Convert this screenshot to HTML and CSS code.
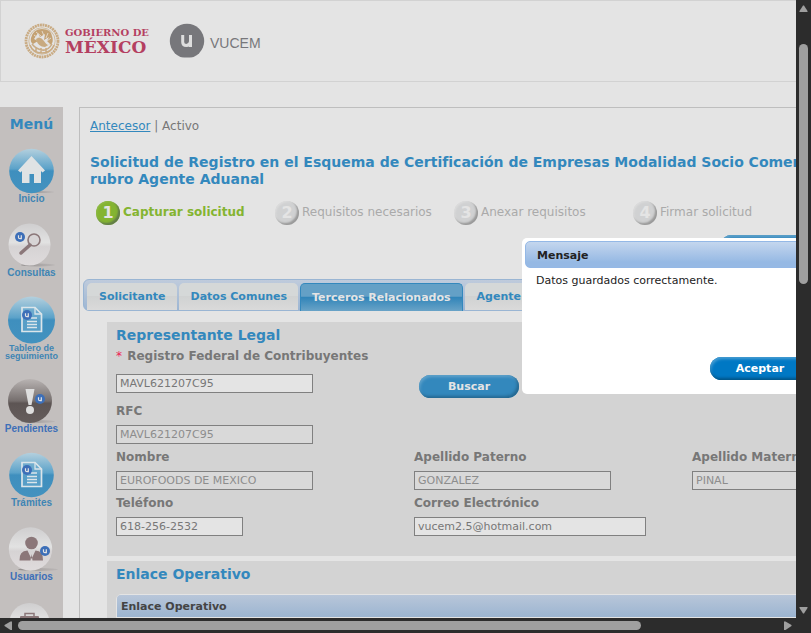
FILE: index.html
```html
<!DOCTYPE html>
<html lang="es">
<head>
<meta charset="utf-8">
<title>VUCEM</title>
<link rel="stylesheet" href="styles.css">
</head>
<body>
<svg class="defs" aria-hidden="true">
  <defs>
    <linearGradient id="blue" x1="0" y1="0" x2="0" y2="1"><stop offset="0" stop-color="#b4d0de"/><stop offset=".45" stop-color="#5ba2c9"/><stop offset=".5" stop-color="#3f8fbe"/><stop offset="1" stop-color="#4392bf"/></linearGradient>
    <linearGradient id="light" x1="0" y1="0" x2="0" y2="1"><stop offset="0" stop-color="#cfcecf"/><stop offset=".45" stop-color="#e2e2e2"/><stop offset=".55" stop-color="#d6d3d4"/><stop offset="1" stop-color="#dfdbdc"/></linearGradient>
    <linearGradient id="dark" x1="0" y1="0" x2="0" y2="1"><stop offset="0" stop-color="#b8b3b2"/><stop offset=".5" stop-color="#756e6d"/><stop offset=".55" stop-color="#5d5554"/><stop offset="1" stop-color="#655d5c"/></linearGradient>
    <linearGradient id="shade" x1="0" y1="0" x2="1" y2="0"><stop offset="0" stop-color="#8a8686" stop-opacity=".9"/><stop offset="1" stop-color="#aaa6a6" stop-opacity=".4"/></linearGradient>
    <g id="badge"><circle r="5" fill="#3d6fb8"/><path d="M-1.500-1.800V.4Q-1.500 1.600 0 1.600T1.300.4V-1.800M1.300-1.800V2.200" fill="none" stroke="#e4e4e4" stroke-width="1.200"/></g>
    <g id="doc" fill="none" stroke="#dbe5ea" stroke-width="1.700"><path d="M22 10.500H35L41.500 17V34.500H22Z" fill="#68a9cd" fill-opacity=".6"/><path d="M35 10.500V17H41.500M31 21H37M27 24.500H37M27 27.500H37M27 30.500H37" stroke-width="1.300"/></g>
  </defs>
</svg>
<div class="window">
  <div class="viewport">
    <div class="page">
      <header class="header">
        <svg class="emblem" viewBox="0 0 36 36" aria-hidden="true">
          <circle cx="18" cy="18" r="16" fill="none" stroke="#c9ab83" stroke-width="2.800" stroke-dasharray="2 .6"/>
          <circle cx="18" cy="18" r="13.200" fill="none" stroke="#d2bd9e" stroke-width="1"/>
          <path d="M7 15Q9 6 18 6Q27 6 28 13Q30 18 27 22L23 18 25 14 20 17 21 11 16 14 14 10 10 16 14 18 9 21Q6 19 7 15Z" fill="#c4a273"/>
          <path d="M12 16Q16 12 20 18T26 21L21 24Q14 24 12 16Z" fill="#c8aa80"/>
          <path d="M10 12L14 15M12 9L17 13M18 8L20 13M24 10L22 15M27 15L23 18" stroke="#e4ddd2" stroke-width=".9"/>
          <path d="M6 22Q9 30 18 30T30 22M8 21Q12 26 18 27T28 21M12 24V28M17 25V30M22 25V29" fill="none" stroke="#c9ab83" stroke-width="1.500"/>
        </svg>
        <div class="gob"><span class="gob-top">GOBIERNO DE</span><span class="gob-name">MÉXICO</span></div>
        <svg class="vucem-mark" viewBox="0 0 36 36" aria-hidden="true"><clipPath id="cut"><rect width="36" height="34.500"/></clipPath><circle cx="18" cy="18" r="17.200" fill="#77777b" clip-path="url(#cut)"/><path d="M13.700 12V19Q13.700 22.500 17.300 22.500T21.500 18.500V12M21.500 18V24" fill="none" stroke="#dedede" stroke-width="3"/></svg>
        <span class="vucem">VUCEM</span>
      </header>
      <div class="columns">
        <nav class="menu">
          <h2>Menú</h2>
          <a href="#"><svg viewBox="0 0 63 46"><ellipse cx="40" cy="44" rx="14" ry="1" fill="url(#shade)"/><circle cx="31.500" cy="23" r="22.300" fill="url(#blue)"/><path d="M31.500 8L45 22.500 42.500 24.500 41 23V35H34V26H29.500V35H22V23L20.500 24.500 18 22.500Z" fill="#e0e3e4"/></svg><span>Inicio</span></a>
          <a href="#"><svg viewBox="0 0 63 46"><ellipse cx="38" cy="43" rx="17" ry="1.400" fill="url(#shade)"/><circle cx="29.500" cy="22.500" r="21" fill="url(#light)"/><circle cx="34" cy="18" r="6" fill="#d7d4d5" stroke="#8b7779" stroke-width="1.600"/><path d="M30 23L21 31" stroke="#8b7779" stroke-width="3.500" stroke-linecap="round"/><use href="#badge" x="20" y="15"/></svg><span>Consultas</span></a>
          <a href="#"><svg class="tall" viewBox="0 0 63 48"><circle cx="31.500" cy="24" r="23.500" fill="url(#blue)"/><use href="#doc" x="0" y="1"/><use href="#badge" x="27" y="19"/></svg><span class="two-line">Tablero de<br>seguimiento</span></a>
          <a class="bright" href="#"><svg viewBox="0 0 63 46"><ellipse cx="38" cy="43.500" rx="17" ry="1.400" fill="url(#shade)"/><circle cx="30" cy="23" r="22" fill="url(#dark)"/><path d="M25.500 11H34.500L31.500 27H28.500Z" fill="#dedede"/><circle cx="30" cy="32" r="4" fill="#dedede"/><use href="#badge" x="40" y="21"/></svg><span>Pendientes</span></a>
          <a href="#"><svg viewBox="0 0 63 46"><circle cx="31.500" cy="23" r="22.300" fill="url(#blue)"/><use href="#doc"/><use href="#badge" x="27" y="18"/></svg><span>Trámites</span></a>
          <a class="bright" href="#"><svg viewBox="0 0 63 46"><ellipse cx="38" cy="43.500" rx="20" ry="1.400" fill="url(#shade)"/><circle cx="30.500" cy="23" r="21.700" fill="url(#light)"/><circle cx="31.500" cy="17" r="6.300" fill="#8b7779"/><path d="M19.500 34.500Q19 25 27.500 24.500L31.500 33 35.500 24.500Q43.500 25 43 34.500H32.500L31.500 28 30.500 34.500Z" fill="#8b7779"/><use href="#badge" x="45" y="25"/></svg><span>Usuarios</span></a>
          <a href="#" aria-label="Administración"><svg viewBox="0 0 63 46"><circle cx="29.500" cy="23" r="20" fill="url(#light)"/><path d="M25 16V13.500H34V16" fill="none" stroke="#8b7779" stroke-width="1.500"/><rect x="20" y="16" width="19" height="14" rx="1" fill="#8b7779"/></svg></a>
        </nav>
        <main class="main">
          <p class="crumbs"><a href="#">Antecesor</a> | Activo</p>
          <h1>Solicitud de Registro en el Esquema de Certificación de Empresas Modalidad Socio Comercial<br>rubro Agente Aduanal</h1>
          <ol class="steps">
            <li class="current"><b>1</b><span>Capturar solicitud</span></li>
            <li><b>2</b><span>Requisitos necesarios</span></li>
            <li><b>3</b><span>Anexar requisitos</span></li>
            <li><b>4</b><span>Firmar solicitud</span></li>
          </ol>
          <div class="actions"><button class="pill wide" type="button" aria-label="Guardar"></button></div>
          <div class="tabs">
            <button type="button">Solicitante</button>
            <button type="button">Datos Comunes</button>
            <button type="button" class="active">Terceros Relacionados</button>
            <button type="button">Agente</button>
          </div>
          <form class="panel">
            <h2>Representante Legal</h2>
            <div class="grid">
              <label for="rfcq"><i>*</i> Registro Federal de Contribuyentes</label>
              <div class="search"><input id="rfcq" value="MAVL621207C95"></div>
              <div class="buscar"><button class="pill" type="button">Buscar</button></div>
              <div class="field first"><label for="rfc">RFC</label><input id="rfc" value="MAVL621207C95" disabled></div>
              <div class="field"><label for="nom">Nombre</label><input id="nom" value="EUROFOODS DE MEXICO" disabled></div>
              <div class="field"><label for="pat">Apellido Paterno</label><input id="pat" value="GONZALEZ" disabled></div>
              <div class="field"><label for="mat">Apellido Materno</label><input id="mat" value="PINAL" disabled></div>
              <div class="field"><label for="tel">Teléfono</label><input id="tel" class="short" value="618-256-2532"></div>
              <div class="field"><label for="mail">Correo Electrónico</label><input id="mail" class="long" value="vucem2.5@hotmail.com"></div>
            </div>
          </form>
          <section class="panel second">
            <h2>Enlace Operativo</h2>
            <table><thead><tr><th colspan="4">Enlace Operativo</th></tr></thead><tbody><tr><td></td><td></td><td></td><td></td></tr></tbody></table>
          </section>
        </main>
      </div>
    </div>
    <div class="dialog" role="dialog" aria-labelledby="dt">
      <h2 id="dt">Mensaje</h2>
      <p>Datos guardados correctamente.</p>
      <div class="dialog-foot"><button class="pill strong" type="button">Aceptar</button></div>
    </div>
  </div>
  <div class="bar vertical" aria-hidden="true"><svg viewBox="0 0 15 15"><path d="M7 5.500H8L11.500 11V12H3.500V11Z"/></svg><div class="track"><div class="thumb"></div></div><svg viewBox="0 0 15 15"><path d="M3.500 4H11.500V5L8 10.500H7L3.500 5Z"/></svg></div>
  <div class="bar horizontal" aria-hidden="true"><svg viewBox="0 0 15 15"><path d="M4.500 7V8L10.500 12H12V3.500H10.500Z"/></svg><div class="track"><div class="thumb"></div></div><svg viewBox="0 0 15 15"><path d="M3 3.500H4.500L10.500 7V8L4.500 12H3Z"/></svg></div>
</div>
</body>
</html>
```
FILE: styles.css
```css
* { box-sizing: border-box; }
body { margin: 0; font-family: Verdana, "DejaVu Sans", sans-serif; font-size: 12px; color: #777; background: #e4e4e4; }
h1, h2, p, ol { margin: 0; padding: 0; }
a { color: #3388bd; }
button, input { font-family: inherit; }
.defs { position: absolute; width: 0; height: 0; }

.window { display: grid; grid-template-columns: minmax(0, 1fr) 15px; grid-template-rows: minmax(0, 1fr) 15px; height: 100vh; background: #2c2c2c; }
.viewport { position: relative; overflow: hidden; background: #e4e4e4; }
.page { min-width: 982px; }

.header { display: flex; align-items: center; height: 82px; padding-left: 23px; border: 1px solid #d2d2d2; }
.emblem { width: 36px; height: 36px; }
.gob { display: flex; flex-direction: column; margin-left: 5px; width: 104px; font-family: "DejaVu Serif", serif; font-weight: bold; color: #b43f61; white-space: nowrap; }
.gob-top { font-size: 10px; line-height: 12px; }
.gob-name { font-size: 17px; line-height: 16px; }
.vucem-mark { width: 36px; height: 36px; }
.vucem { margin-left: 5px; padding-top: 4px; font: 14px/16px "Liberation Sans", sans-serif; color: #77777b; }

.columns { display: flex; gap: 16px; margin-top: 25px; }
.menu { flex: none; width: 63px; padding-top: 8px; background: #c3bfbe; display: flex; flex-direction: column; gap: 18px; }
.menu h2 { font-size: 14px; line-height: 18px; margin-bottom: -3px; text-align: center; color: #3388bd; }
.menu a { display: flex; flex-direction: column; text-align: center; text-decoration: none; font: bold 10px/10px "Liberation Sans", sans-serif; color: #3f85b4; white-space: nowrap; }
.menu .bright { color: #3d6fb8; }
.menu svg { width: 63px; height: 46px; }
.menu .tall { height: 48px; }
.menu .two-line { font-size: 9px; line-height: 8px; }

.main { flex: 1; border: 1px solid #bebebe; padding: 10px 3px 40px; }
.crumbs { padding-left: 7px; line-height: 16px; }
h1 { padding-left: 7px; margin-top: 20px; font-size: 14px; line-height: 17px; color: #3388bd; white-space: nowrap; }
.steps { display: grid; grid-template-columns: repeat(4, 179px); margin-top: 13px; padding-left: 13px; list-style: none; color: #aaa; }
.steps li { display: flex; align-items: center; gap: 3px; white-space: nowrap; }
.steps span { line-height: 16px; padding-bottom: 3px; }
.steps b { width: 24px; height: 24px; border-radius: 50%; background: #d0d1d2; box-shadow: inset -2px -2px 2px #999, inset 1px 1px 2px #dcdcdc; color: #e4e4e4; font-size: 16px; line-height: 23px; text-align: center; }
.steps .current { color: #84b431; font-weight: bold; }
.steps .current b { background: #84b431; box-shadow: inset -2px -2px 2px #627c4a, inset 1px 1px 2px #8fba48; }

.pill { width: 100px; height: 23px; padding: 0; border: 0; border-radius: 12px; background: #3388bd; box-shadow: inset -2px -2px 3px #256891, inset 1px 2px 3px #62a3cb; color: #e4e4e4; font-size: 11px; font-weight: bold; line-height: 23px; }
.wide { width: 140px; }
.strong { background: #0078c4; box-shadow: inset -1px -2px 3px #005487, inset 1px 2px 3px #4ba0d4; color: #fff; }
.actions { padding: 10px 0 0 637px; height: 54px; }

.tabs { display: flex; align-items: flex-end; gap: 2px; height: 32px; padding: 0 3px; border: 1px solid #9ab5d3; border-radius: 6px 6px 0 6px; background: linear-gradient(#bfcbdc, #9db6d3); }
.tabs button { height: 27px; padding: 0 11px 0 12px; border: 0; border-radius: 5px 5px 0 0; background: linear-gradient(#d5d8d8 50%, #d0d2d2 50%, #dadada); color: #3388bd; font-size: 11px; font-weight: bold; white-space: nowrap; }
.tabs .active { height: 28px; margin-bottom: -1px; border: 1px solid #3388bd; border-bottom: 0; padding: 0 11px; background: linear-gradient(#64a0c6 45%, #3285b9 50%, #69a3c7); color: #e4e4e4; }

.panel { margin: 11px 0 0 24px; padding: 4px 9px 16px; background: #d3d3d3; }
.panel h2 { font-size: 14px; line-height: 18px; color: #3388bd; }
.grid { display: grid; grid-template-columns: 298px 278px 1fr; }
.panel label { display: block; font-weight: bold; line-height: 18px; white-space: nowrap; }
.grid > label { grid-column: 1 / -1; padding: 3px 0 5px; }
.panel i { font-style: normal; font-weight: normal; color: #ee2255; margin-right: 1px; }
.search { padding-top: 4px; }
.buscar { padding: 5px 0 4px 5px; }
.field { height: 46px; }
.field.first { grid-column: 1 / -1; }
.panel input { display: block; width: 197px; height: 19px; margin-top: 5px; padding: 0 3px; border: 1px solid #808080; border-radius: 0; background: #e4e4e4; color: #777; font-size: 11px; }
.search input { margin-top: 0; }
.panel input:disabled { background: #d9d9d9; color: #8d8d8d; }
.panel .short { width: 127px; }
.panel .long { width: 232px; }
.second { margin-top: 5px; }
table { width: 100%; margin-top: 11px; border-collapse: separate; border-spacing: 0; border: 1px solid #e4e4e4; border-radius: 5px 5px 0 0; }
th { height: 22px; padding: 0 4px; background: linear-gradient(#b8c6d9, #9cb5d1); border-radius: 4px 4px 0 0; color: #444; font-size: 11px; text-align: left; }
td { height: 22px; border-top: 1px solid #e4e4e4; border-right: 1px solid #e4e4e4; }

.dialog { position: absolute; left: 522px; top: 238px; width: 302px; height: 156px; padding: 3px; display: flex; flex-direction: column; border-radius: 5px; background: #fff; color: #222; font-size: 11px; }
.dialog h2 { height: 27px; padding-left: 11px; border: 1px solid #94b8e6; border-radius: 5px; background: linear-gradient(#c4d6ee, #96b9e4 80%); font-size: 11px; line-height: 28px; }
.dialog p { padding: 5px 11px; line-height: 16px; }
.dialog-foot { margin-top: auto; padding: 0 0 11px 185px; }

.bar { display: flex; background: #2c2c2c; min-width: 0; min-height: 0; }
.bar svg { flex: none; width: 15px; height: 15px; fill: #9f9f9f; }
.vertical { flex-direction: column; }
.track { flex: 1; }
.thumb { background: #9f9f9f; border-radius: 5px; }
.vertical .track { padding: 29px 3px 0; }
.vertical .thumb { height: 43%; }
.horizontal .track { padding: 3px 3px 0; }
.horizontal .thumb { width: 82%; height: 9px; }
```
